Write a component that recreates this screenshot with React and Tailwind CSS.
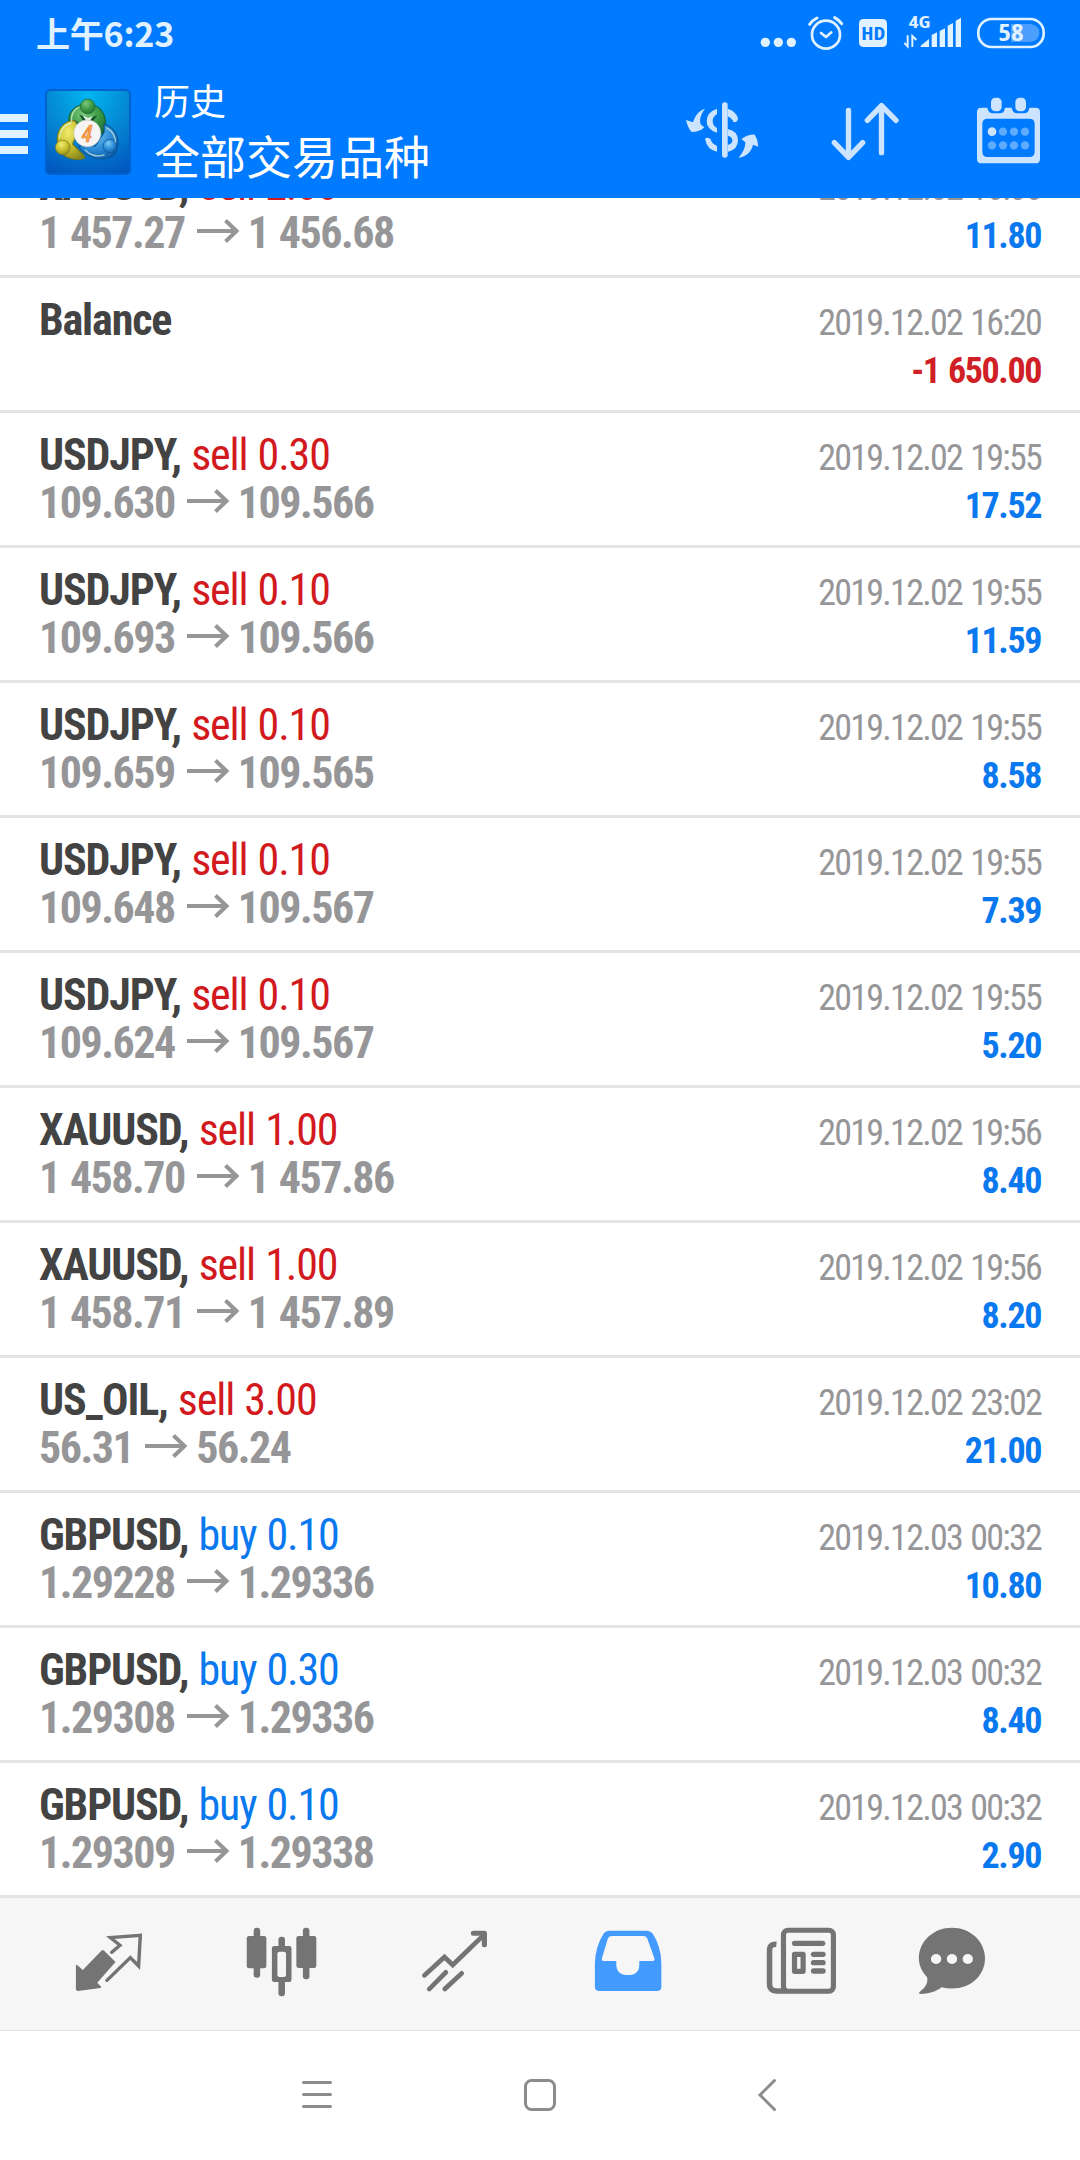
const ROWS = [
  { symbol: "XAUUSD", side: "sell", volume: "2.00", from: "1 457.27", to: "1 456.68", time: "2019.12.02 16:06", profit: "11.80" },
  { symbol: "Balance", time: "2019.12.02 16:20", profit: "-1 650.00" },
  { symbol: "USDJPY", side: "sell", volume: "0.30", from: "109.630", to: "109.566", time: "2019.12.02 19:55", profit: "17.52" },
  { symbol: "USDJPY", side: "sell", volume: "0.10", from: "109.693", to: "109.566", time: "2019.12.02 19:55", profit: "11.59" },
  { symbol: "USDJPY", side: "sell", volume: "0.10", from: "109.659", to: "109.565", time: "2019.12.02 19:55", profit: "8.58" },
  { symbol: "USDJPY", side: "sell", volume: "0.10", from: "109.648", to: "109.567", time: "2019.12.02 19:55", profit: "7.39" },
  { symbol: "USDJPY", side: "sell", volume: "0.10", from: "109.624", to: "109.567", time: "2019.12.02 19:55", profit: "5.20" },
  { symbol: "XAUUSD", side: "sell", volume: "1.00", from: "1 458.70", to: "1 457.86", time: "2019.12.02 19:56", profit: "8.40" },
  { symbol: "XAUUSD", side: "sell", volume: "1.00", from: "1 458.71", to: "1 457.89", time: "2019.12.02 19:56", profit: "8.20" },
  { symbol: "US_OIL", side: "sell", volume: "3.00", from: "56.31", to: "56.24", time: "2019.12.02 23:02", profit: "21.00" },
  { symbol: "GBPUSD", side: "buy", volume: "0.10", from: "1.29228", to: "1.29336", time: "2019.12.03 00:32", profit: "10.80" },
  { symbol: "GBPUSD", side: "buy", volume: "0.30", from: "1.29308", to: "1.29336", time: "2019.12.03 00:32", profit: "8.40" },
  { symbol: "GBPUSD", side: "buy", volume: "0.10", from: "1.29309", to: "1.29338", time: "2019.12.03 00:32", profit: "2.90" },
];

function StatusBar() {
  return (
    <div className="flex h-[66px] items-center justify-between pl-9 text-[#e0f1ff]">
      <div className="font-['Noto_Sans_CJK_SC',sans-serif] text-[34px] leading-[66px] font-bold tracking-[-0.2px]">上午6:23</div>
      <div className="flex h-[66px] font-['Open_Sans',sans-serif]">
        <svg className="h-[66px] w-[46px]" viewBox="288 0 138 198" fill="currentColor">
          <circle cx="316" cy="127" r="14" />
          <circle cx="355" cy="127" r="14" />
          <circle cx="394" cy="127" r="14" />
        </svg>
        <svg className="h-[66px] w-[49px]" viewBox="426 0 147 198" fill="none" stroke="currentColor" strokeLinecap="round" strokeLinejoin="round">
          <circle cx="498" cy="104" r="42" strokeWidth="8" />
          <path d="M483 99l15 12 16-14" strokeWidth="8" />
          <path d="M449 73q8-12 22-19M545 71q-8-11-21-18" strokeWidth="9" />
        </svg>
        <svg className="h-[66px] w-[45px]" viewBox="573 0 135 198" fill="currentColor">
          <rect x="597" y="57" width="84" height="84" rx="13" />
          <text x="640" y="120" textAnchor="middle" textLength="72" lengthAdjust="spacingAndGlyphs" className="fill-[#007aff] text-[54px] font-bold">HD</text>
        </svg>
        <svg className="h-[66px] w-[73px]" viewBox="708 0 219 198" fill="currentColor">
          <text x="746" y="84" textLength="65" lengthAdjust="spacingAndGlyphs" className="text-[46px] font-bold">4G</text>
          <path d="M782 141v-4l25-20v24zM815 141v-36l16-8v44zM839 141V93l16-8v56zM863 141V77l16-8v72zM887 141V62l16-9v88z" />
          <path d="M743 106v33l-10-10M757 141v-33l12 12" fill="none" stroke="currentColor" strokeWidth="6" />
        </svg>
        <svg className="h-[66px] w-[111px]" viewBox="927 0 333 198" fill="none">
          <rect x="955" y="57" width="196" height="84" rx="40" stroke="currentColor" strokeWidth="8" />
          <path d="M1053 72h58q27 4 27 27t-27 27h-58z" fill="#4d9fff" />
          <text x="1053" y="124" textAnchor="middle" textLength="76" lengthAdjust="spacingAndGlyphs" className="fill-[#e0f1ff] text-[68px] font-bold">58</text>
        </svg>
      </div>
    </div>
  );
}

function AppLogo() {
  return (
    <svg className="ml-[17px] size-[86px]" viewBox="48 42 256 256">
      <defs>
        <radialGradient id="tile" cx="0.5" cy="0.05" r="1">
          <stop offset="0" stopColor="#00b4f0" />
          <stop offset="0.5" stopColor="#0588d4" />
          <stop offset="1" stopColor="#0058bf" />
        </radialGradient>
        <radialGradient id="green" cx="0.4" cy="0.3" r="0.8">
          <stop offset="0" stopColor="#7cc97c" />
          <stop offset="0.5" stopColor="#3f9c48" />
          <stop offset="1" stopColor="#176a2e" />
        </radialGradient>
        <radialGradient id="yellow" cx="0.4" cy="0.3" r="0.8">
          <stop offset="0" stopColor="#f3ec70" />
          <stop offset="0.5" stopColor="#c9c02e" />
          <stop offset="1" stopColor="#80801a" />
        </radialGradient>
        <radialGradient id="blue" cx="0.4" cy="0.3" r="0.8">
          <stop offset="0" stopColor="#7cc8f5" />
          <stop offset="0.5" stopColor="#2e8fd8" />
          <stop offset="1" stopColor="#0a57a5" />
        </radialGradient>
      </defs>
      <rect x="51" y="45" width="250" height="250" rx="12" fill="url(#tile)" stroke="#0062cc" strokeWidth="6" />
      <path d="M121 146c-8-22 6-48 32-56h40c30 10 46 50 27 84l-18 4-66-42z" fill="url(#green)" stroke="#12602f" strokeWidth="3" />
      <path d="M136 136c-30 0-52 24-52 58l10 32c8 20 38 30 66 24 10-2 8-8 0-14l-30-30 20-50z" fill="url(#yellow)" stroke="#6f741c" strokeWidth="3" />
      <path d="M224 146c30 10 44 36 41 62l-5 20c-14 26-54 28-78 14-16-8-28-18-34-30h50l26-40z" fill="url(#blue)" stroke="#0b5295" strokeWidth="3" />
      <path d="M127 140c-2-20 6-36 22-44M91 186c2-20 14-38 34-42M232 158c16 8 26 26 26 44M168 224c12 14 34 22 56 14" fill="none" stroke="#dcf6d8" strokeOpacity="0.7" strokeWidth="4" strokeLinecap="round" />
      <path d="M150 118l28 12 26-10-16 22h-24z" fill="#13552d" />
      <path d="M160 121l17 7 14-6-8 12h-14z" fill="#e9f5e4" />
      <circle cx="175" cy="94" r="22" fill="url(#green)" stroke="#1d6b33" strokeWidth="2" />
      <circle cx="101" cy="216" r="22" fill="url(#yellow)" stroke="#77761c" strokeWidth="2" />
      <circle cx="241" cy="212" r="20" fill="url(#blue)" stroke="#0b5295" strokeWidth="2" />
      <circle cx="174" cy="174" r="40" fill="#f6f4f4" stroke="#c9cfc9" strokeWidth="2" />
      <text x="173" y="199" textAnchor="middle" className="fill-[#fcae52] stroke-[#e8742c] font-['Open_Sans',sans-serif] text-[70px] font-semibold italic" strokeWidth="2">4</text>
    </svg>
  );
}

function CurrencyIcon() {
  return (
    <svg className="size-20" viewBox="60 276 240 240" fill="currentColor">
      <path d="M135 326c-14 18-18 36-12 48l10 8c-10 10-22 14-38 14-8-8-14-22-17-36l21 7c6-20 18-36 36-41z" />
      <path d="M236 473c14-16 20-32 20-46l-12-10c14-10 30-14 40-13 8 12 10 22 10 36l-15-6c-4 20-20 36-43 39z" />
      <rect x="186" y="307" width="17" height="166" rx="8" />
      <path d="M171 326v17q-13 7-13 21t13 20v14q-31-9-31-35t31-37zM135 416q10-6 17 2 2 12 19 20v17q-30-6-36-39z" />
      <path d="M203 326q25 8 31 28-1 14-13 13-4-11-18-18zM203 387q31 6 31 34t-31 35v-21q14-3 14-14t-14-14z" />
    </svg>
  );
}

function SortIcon() {
  return (
    <svg className="size-20" viewBox="492 276 240 240" fill="none" stroke="currentColor" strokeWidth="16" strokeLinecap="round" strokeLinejoin="round">
      <path d="M565.500 331v141M523 428l42.500 44 42.500-44M664.500 458V317M622 361l42.500-44 43.500 44" />
    </svg>
  );
}

function CalendarIcon() {
  return (
    <svg className="size-20" viewBox="924 276 240 240" fill="currentColor">
      <path fillRule="evenodd" d="M964 323h18q3 17 17 17h20q14 0 16-17h20q3 17 17 17h20q14 0 16-17h19q13 0 13 13v140q0 14-13 14H964q-13 0-13-14V336q0-13 13-13zM983 356q-16 0-16 16v83q0 16 16 16h125q16 0 16-16v-83q0-16-16-16z" />
      <rect x="993" y="293" width="32" height="41" rx="13" />
      <rect x="1066" y="293" width="32" height="41" rx="13" />
      <circle cx="996" cy="395" r="13" />
      <g fill="#5eabff">
        <circle cx="1029" cy="395" r="12.500" />
        <circle cx="1062" cy="395" r="12.500" />
        <circle cx="1095" cy="395" r="12.500" />
        <circle cx="996" cy="436" r="12.500" />
        <circle cx="1029" cy="436" r="12.500" />
        <circle cx="1062" cy="436" r="12.500" />
        <circle cx="1095" cy="436" r="12.500" />
      </g>
    </svg>
  );
}

function Toolbar() {
  return (
    <div className="flex h-[132px] items-center">
      <div className="mt-[3px] flex w-7 flex-col gap-2">
        <div className="h-2 bg-[#e0f1ff]" />
        <div className="h-2 bg-[#e0f1ff]" />
        <div className="h-2 bg-[#e0f1ff]" />
      </div>
      <AppLogo />
      <div className="ml-[23px] flex-1 pb-[11px] font-['Noto_Sans_CJK_SC',sans-serif] whitespace-nowrap text-white">
        <div className="text-[36px] leading-[54px]">历史</div>
        <div className="text-[46px] leading-[56px]">全部交易品种</div>
      </div>
      <div className="flex text-[#cce4ff]">
        <div className="flex w-36 justify-center"><CurrencyIcon /></div>
        <div className="flex w-36 justify-center"><SortIcon /></div>
        <div className="flex w-36 justify-center"><CalendarIcon /></div>
      </div>
    </div>
  );
}

function PriceArrow() {
  return (
    <svg className="mt-[10px] mr-[8px] ml-[12px] h-6 w-[43px]" viewBox="0 0 43 24" fill="none" stroke="currentColor" strokeWidth="4">
      <path d="M0 12h40M28.500 1.500L39.500 12 28.500 22.500" />
    </svg>
  );
}

function HistoryRow({ row }) {
  const buy = row.side === "buy";
  const negative = row.profit.startsWith("-");
  return (
    <div className="flex h-[135px] shrink-0 justify-between border-b-3 border-[#e4e4e4] pr-[39px] pl-[39px] whitespace-nowrap">
      <div className="pt-[18px] text-[44px] leading-[48px]">
        <div className="font-bold tracking-[-1.15px] text-[#434343] [word-spacing:1.2px]">
          {row.symbol}
          {row.side && (
            <span>
              , <span className={buy ? "font-normal text-[#0a78ee]" : "font-normal text-[#d2191e]"}>{row.side} {row.volume}</span>
            </span>
          )}
        </div>
        {row.from && (
          <div className="flex font-bold tracking-[-1.5px] text-[#969698] [word-spacing:1.5px]">
            <span>{row.from}</span>
            <PriceArrow />
            <span>{row.to}</span>
          </div>
        )}
      </div>
      <div className="pt-[21px] text-right text-[36px] leading-[48px]">
        <div className="tracking-[-1.75px] text-[#969698] [word-spacing:1.8px]">{row.time}</div>
        <div className={negative ? "font-bold tracking-[-1.4px] text-[#d01f26] [word-spacing:1.5px]" : "font-bold tracking-[-1.4px] text-[#0a78ee]"}>{row.profit}</div>
      </div>
    </div>
  );
}

function TabBar() {
  return (
    <div className="flex h-[133px] shrink-0 items-center border-b border-[#e0e0e0] bg-[#f6f6f6] pl-[22px] text-[#747474]">
      <div className="flex w-[173px] justify-center">
        <svg className="size-20" viewBox="198.900 102 232.300 240" preserveAspectRatio="none" fill="none">
          <path d="M219 224q4 0 20 16l54-58q4-4 8 0l33 34-53 62 12 13q-2 4-8 4l-60 8q-6 0-6-6z" fill="currentColor" />
          <path d="M323 187l24-21-28-23 87-7-5 92-24-25-68 68" stroke="currentColor" strokeWidth="10" strokeLinecap="round" />
        </svg>
      </div>
      <div className="flex w-[173px] justify-center">
        <svg className="size-20" viewBox="701.200 102 232.300 240" preserveAspectRatio="none" fill="currentColor">
          <rect x="735" y="113" width="19" height="150" rx="9" />
          <rect x="715" y="138" width="57" height="97" rx="7" />
          <rect x="878" y="113" width="19" height="155" rx="9" />
          <rect x="859" y="138" width="58" height="96" rx="7" />
          <rect x="807" y="140" width="19" height="179" rx="9" />
          <rect x="788" y="168" width="57" height="108" rx="7" />
          <rect x="804" y="185" width="25" height="76" rx="6" fill="#f6f6f6" />
        </svg>
      </div>
      <div className="flex w-[173px] justify-center">
        <svg className="size-20" viewBox="1203.500 102 232.300 240" preserveAspectRatio="none" fill="none" stroke="currentColor" strokeWidth="14">
          <path d="M1231 256l58-55 24 24 92-92" strokeLinecap="round" />
          <path d="M1373 130h32v34" strokeWidth="15" strokeLinecap="round" strokeLinejoin="round" />
          <path d="M1245 297l48-50M1290 297l49-47" strokeLinecap="round" />
        </svg>
      </div>
      <div className="flex w-[173px] justify-center text-[#449bff]">
        <svg className="size-20" viewBox="138 102 232.300 240" preserveAspectRatio="none" fill="currentColor">
          <path fillRule="evenodd" d="M199 122h110q10 0 16 8 25 38 26 90v70q0 13-13 13H171q-13 0-13-13v-70q1-50 26-90 5-8 15-8zM207 138q-8 0-11 7l-18 61q-1 7 5 7h37v8q0 34 34 34t33-34v-8h39q6 0 5-7l-21-61q-4-7-11-7z" />
        </svg>
      </div>
      <div className="flex w-[173px] justify-center">
        <svg className="size-20" viewBox="640.200 102 232.300 240" preserveAspectRatio="none" fill="currentColor">
          <rect x="705.500" y="120.500" width="145" height="183" rx="13" fill="none" stroke="currentColor" strokeWidth="15" />
          <path d="M685 163q-20-2-20 18v102q0 20 20 20h30" fill="none" stroke="currentColor" strokeWidth="16" />
          <rect x="730" y="152" width="97" height="16" rx="8" />
          <path fillRule="evenodd" d="M738 185h24q8 0 8 8v51q0 8-8 8h-24q-8 0-8-8v-51q0-8 8-8zM745 201v35h10v-35z" />
          <rect x="785" y="185" width="43" height="16" rx="8" />
          <rect x="785" y="210" width="43" height="16" rx="8" />
          <rect x="785" y="235" width="43" height="16" rx="8" />
        </svg>
      </div>
      <div className="flex w-[130px] justify-center">
        <svg className="size-20" viewBox="1083 102 232.300 240" preserveAspectRatio="none" fill="currentColor">
          <path d="M1199 113c53 0 96 40 96 92 0 60-56 104-126 87-18 14-40 20-60 20q-10-1-3-7c16-12 24-26 21-43-15-16-24-36-24-57 0-52 43-92 96-92z" />
          <g fill="#f6f6f6">
            <circle cx="1153" cy="207" r="15" />
            <circle cx="1199" cy="207" r="15" />
            <circle cx="1245" cy="207" r="15" />
          </g>
        </svg>
      </div>
    </div>
  );
}

function SystemNav() {
  return (
    <div className="flex h-[129px] shrink-0 items-start pt-[44px] pl-[295px] text-[#8c8c8c]">
      <svg className="h-10 w-11" viewBox="0 0 44 40" fill="none" stroke="currentColor" strokeWidth="3" strokeLinecap="round">
        <path d="M8.500 7.500h27M8.500 19.500h27M8.500 31.500h27" />
      </svg>
      <svg className="ml-[179px] h-10 w-11" viewBox="0 0 44 40" fill="none" stroke="currentColor" strokeWidth="3">
        <rect x="7.500" y="5.500" width="29" height="29" rx="6" />
      </svg>
      <svg className="ml-[184px] h-10 w-11" viewBox="0 0 44 40" fill="none" stroke="currentColor" strokeWidth="3" strokeLinecap="round">
        <path d="M28.500 5.500L14 20 28.500 34.500" />
      </svg>
    </div>
  );
}

export default function App() {
  return (
    <div className="flex h-[2160px] w-[1080px] flex-col overflow-hidden bg-white font-['Roboto_Condensed','Roboto',sans-serif] font-stretch-condensed">
      <header className="z-10 h-[198px] shrink-0 bg-[#007aff]">
        <StatusBar />
        <Toolbar />
      </header>
      <main className="-mt-[55px] flex flex-col">
        {ROWS.map((row, i) => (
          <HistoryRow key={i} row={row} />
        ))}
      </main>
      <TabBar />
      <SystemNav />
    </div>
  );
}
